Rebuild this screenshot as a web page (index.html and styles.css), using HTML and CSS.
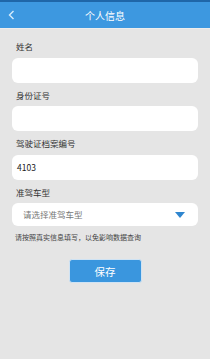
FILE: index.html
```html
<!DOCTYPE html>
<html lang="zh-CN">
<head>
    <meta charset="UTF-8">
    <meta name="viewport" content="width=device-width, initial-scale=1.0">
    <title>个人信息</title>
    <link rel="stylesheet" href="styles.css">
</head>
<body>

    <!-- Top Bar -->
    <div class="top-bar">
        <span class="back">
            <svg width="7" height="10" viewBox="0 0 7 10"><path d="M5.5 1 L1.5 5 L5.5 9" fill="none" stroke="#d6ecfb" stroke-width="1.4"/></svg>
        </span>
        <span class="title">个人信息</span>
    </div>

    <!-- Form -->
    <div class="form">
        <div class="label first">姓名</div>
        <div class="field"></div>

        <div class="label">身份证号</div>
        <div class="field"></div>

        <div class="label">驾驶证档案编号</div>
        <div class="field">4103</div>

        <div class="label">准驾车型</div>
        <div class="field select">
            <span class="placeholder">请选择准驾车型</span>
            <svg class="arrow" width="10" height="6" viewBox="0 0 10 6"><path d="M0 0 L10 0 L5 6 Z" fill="#2f86cf"/></svg>
        </div>

        <div class="hint">请按照真实信息填写，以免影响数据查询</div>

        <div class="btn-row">
            <button class="save-btn">保存</button>
        </div>
    </div>

</body>
</html>
```

FILE: styles.css
```css
/* General Body Styling */
body {
    font-family: "Noto Sans CJK SC", "Noto Sans", sans-serif;
    background-color: #e5e5e5;
    margin: 0;
    color: #333;
}

/* Top Bar */
.top-bar {
    height: 26px;
    border-top: 2px solid #1f66a8;
    background-color: #3d98e0;
    display: flex;
    align-items: center;
    justify-content: center;
    position: relative;
    border-bottom: 1px solid #ededed;
}

.top-bar .back {
    position: absolute;
    left: 8px;
    top: 8px;
    display: flex;
}

.top-bar .title {
    color: #fff;
    font-size: 10px;
}

/* Form */
.form {
    padding: 0 12px;
}

.label {
    height: 23.5px;
    line-height: 25px;
    font-size: 8.5px;
    padding-left: 4px;
    color: #333;
}

.label.first {
    margin-top: 5px;
}

.field {
    height: 25px;
    line-height: 25px;
    background-color: #fff;
    border-radius: 6px;
    font-size: 8.5px;
    padding-left: 5px;
    color: #222;
}

.select {
    height: 23px;
    display: flex;
    align-items: center;
    justify-content: space-between;
    padding: 0 13px 0 11px;
}

.placeholder {
    color: #777;
    font-size: 8.5px;
}

.hint {
    font-size: 7px;
    color: #444;
    padding-left: 3px;
    margin-top: 6px;
    line-height: 10px;
}

/* Save Button */
.btn-row {
    display: flex;
    justify-content: center;
    margin-top: 17px;
}

.save-btn {
    width: 73px;
    height: 24px;
    background-color: #3a96de;
    color: #fff;
    border: 1px solid #cfe3f4;
    border-radius: 3px;
    font-family: inherit;
    font-size: 10.5px;
    padding: 0;
}
```
